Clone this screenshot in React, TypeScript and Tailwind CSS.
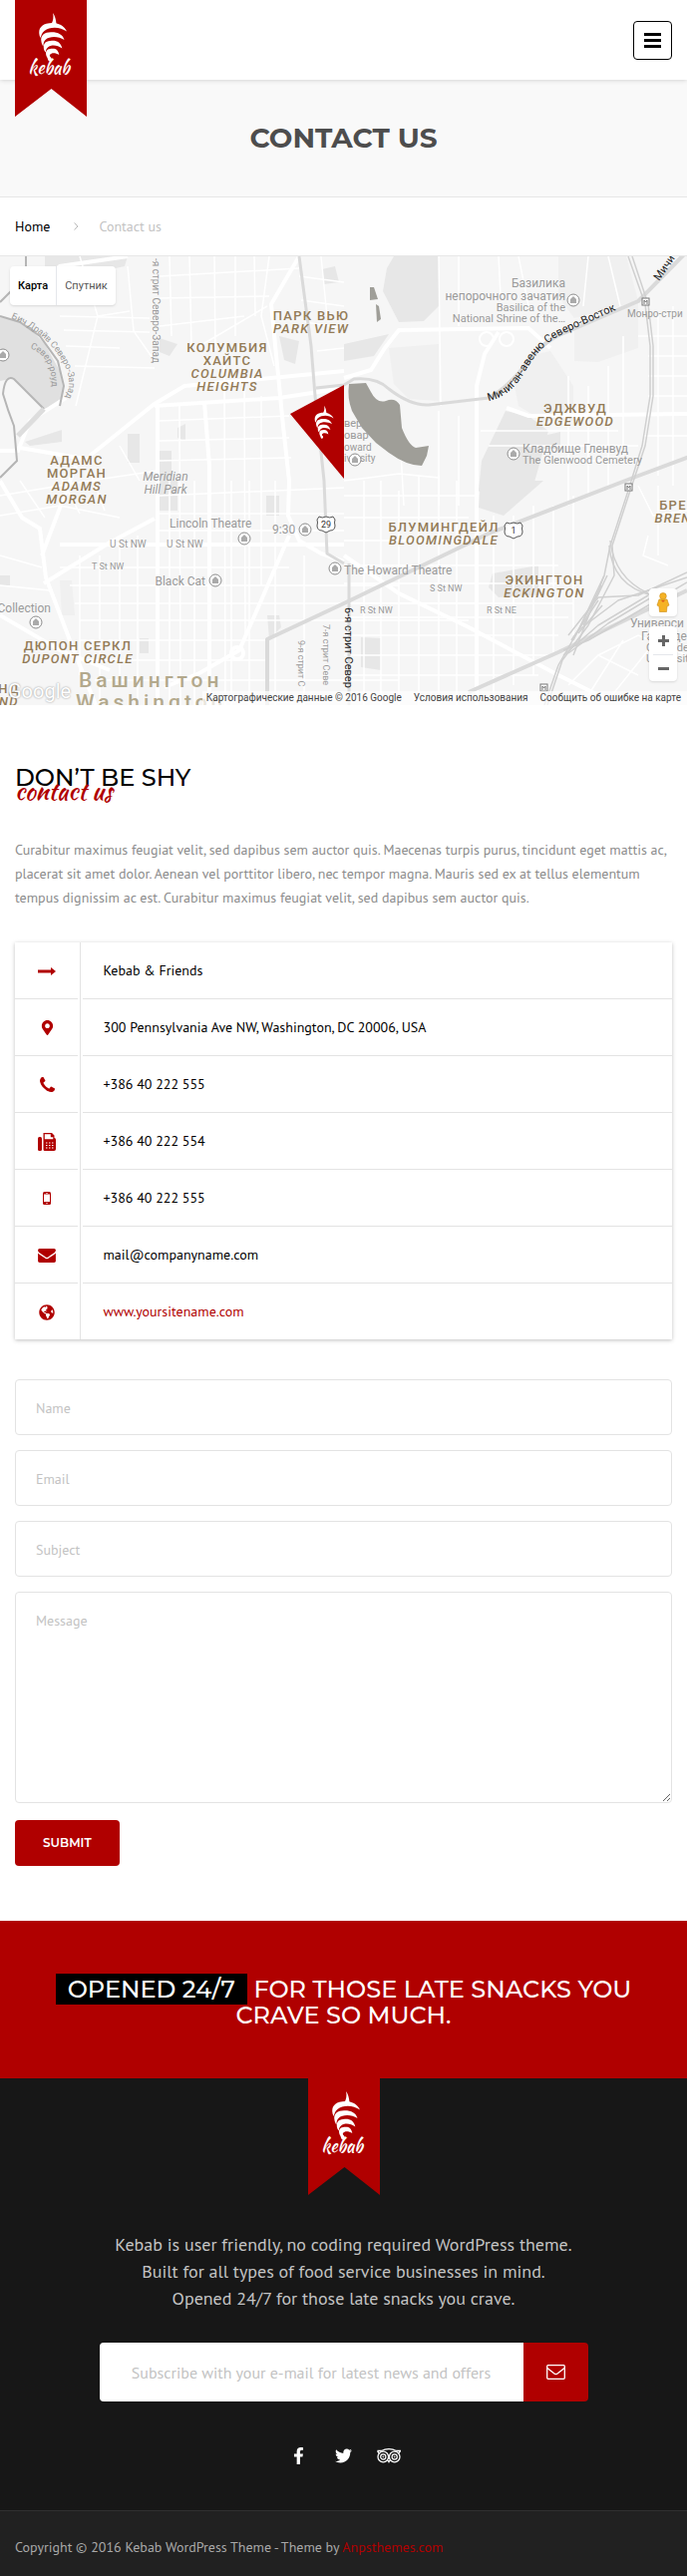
import {
  FaFacebookF,
  FaGlobeAmericas,
  FaMapMarkerAlt,
  FaTripadvisor,
  FaTwitter,
} from "react-icons/fa";

const contactRows = [
  { icon: <ArrowIcon />, label: "Kebab & Friends" },
  {
    icon: <FaMapMarkerAlt size={15} />,
    label: "300 Pennsylvania Ave NW, Washington, DC 20006, USA",
  },
  { icon: <PhoneIcon />, label: "+386 40 222 555" },
  { icon: <FaxIcon />, label: "+386 40 222 554" },
  { icon: <MobileIcon />, label: "+386 40 222 555" },
  { icon: <EnvelopeIcon />, label: "mail@companyname.com" },
  {
    icon: <FaGlobeAmericas size={16} />,
    label: "www.yoursitename.com",
    href: "#",
  },
];

const formFields = [
  { name: "name", type: "text", label: "Name" },
  { name: "email", type: "email", label: "Email" },
  { name: "subject", type: "text", label: "Subject" },
];

const socialLinks = [
  { label: "Facebook", icon: <FaFacebookF size={17} /> },
  { label: "Twitter", icon: <FaTwitter size={17} /> },
  { label: "TripAdvisor", icon: <TripAdvisorIcon /> },
];

// thin white streets
const streets = [
  "M80 0L98 60L76 150M98 60L130 55M60 60L150 62M64 74L150 76M66 90L120 92M75 110L155 112M128 10L134 75L155 105",
  "M170 0L172 80M190 0L192 90M215 0L216 95M236 0L236 80M255 0L256 60M160 20L300 12M160 42L270 40M160 70L245 60M200 90L268 50",
  "M225 110L226 450M245 125L246 380M262 140L262 330M180 150L181 450M270 0L262 60L275 110M160 165L290 160M160 185L290 182M160 205L292 202",
  "M300 20L345 26M302 44L345 50M306 66L345 72M322 0L328 60M318 95L345 92M320 170L345 172M323 200L345 202",
  "M0 240L90 225L158 215M0 260L60 250L120 262M20 225L45 262M60 220L80 258M90 215L105 255M120 190L140 225M0 300L42 312M0 330L50 335",
  "M60 312H290M70 330H400M75 348H480M80 365H470M80 385H268M85 405H268M95 425H400M80 300V420M100 300V450M120 290V430M138 280V450",
  "M170 225V450M195 225V450M232 225V450M250 225V450M276 225V450M305 300V450M160 240L345 232M160 258H345M160 275H345",
  "M345 240H480M345 262H470M345 285H470M345 310H560M345 328H560M345 348H575M345 362H570M345 380H560M345 400H555M345 420H540",
  "M365 225V450M382 225V450M400 235V450M420 220V450M440 220V450M458 225V450M495 260V440M515 260V430M535 250V420M555 250V400M575 240V380",
  "M482 175H620M490 190H640M560 205H640M570 120V250M590 130V240M610 110V230M625 80V200M660 60V220M675 50V230M640 80H689M650 100H689M650 120H689M650 140H689M645 180H689",
  "M440 0L442 150M460 0V70M400 160L405 250M440 155V250M460 160V250M345 225L370 222L400 218L440 222M500 0L502 40M520 0L530 50M590 0L585 50M610 0L622 50",
  "M640 230L655 260L689 255M650 280L645 300L670 310M660 230V300M570 430L600 400L640 420M590 440L625 385M610 445L650 395M600 400L640 380L689 400",
];

const avenues = [
  "M158 150V450",
  "M90 200L155 148L185 130L240 125L345 115",
  "M155 150L280 142L345 132",
  "M205 146L210 210V450",
  "M300 0L272 48L284 170L290 225L289 260L300 285L322 298L345 306",
  "M290 280L262 345L240 395L200 418L165 432",
  "M0 225L22 262L40 273L46 322L70 385L96 450",
  "M76 210L42 300",
  "M44 328L110 287L155 263",
  "M60 289H345",
  "M20 192L90 204",
  "M0 195H18L30 165L66 142",
  "M345 122L372 114L386 92L400 74L530 72L552 92",
  "M500 76L486 98L478 130V450",
  "M508 152L530 160L689 158",
  "M345 300L400 338L470 372L560 420L610 445",
  "M42 26L60 10L128 0",
  "M0 360L60 395L110 415",
];

const blocks = [
  "M45 0H128L125 10L60 24L45 10Z",
  "M160 82L178 88L170 100L160 96Z",
  "M280 80L300 85L296 108L285 104Z",
  "M25 186L62 174V186L30 190Z",
  "M323 13L336 10L340 26L325 28Z",
  "M128 178H140V207H128Z",
  "M160 195H172V225H178V255H160Z",
  "M178 172L186 168V185L178 182Z",
  "M267 240H280V260H267Z",
  "M268 360H280L282 372L270 384Z",
  "M0 320H10V330H0Z",
  "M140 383H149V398H140Z",
  "M395 0H440V50L425 65L400 66L384 35L388 12Z",
  "M345 88L390 78L375 100L345 105Z",
  "M507 155L530 160L550 175L542 205L535 230L500 253L480 235L483 205Z",
  "M482 225H545L505 260L480 252Z",
  "M494 318L540 310V340L500 342L490 332Z",
  "M362 382L382 383V415L362 412Z",
  "M545 180L562 176V193H545Z",
];

const paleBlocks = [
  "M60 325H72L75 360H62Z",
  "M576 72L640 45V92L600 106L576 105Z",
  "M530 100L552 95L575 130V165L545 165L520 150L515 125Z",
  "M560 0H628L640 45L576 62L560 40Z",
  "M390 92L440 88V145L410 143L395 128Z",
];

const railways = [
  "M630 0L647 48L652 90L652 140L644 190L630 235L612 290L606 320L580 375L560 410L546 450",
  "M634 0L650 48L655 90L655 140L647 190L632 235L614 290L616 320L590 370L564 405L549 450",
  "M612 285Q616 322 650 338",
  "M611 290Q614 330 654 340",
  "M689 322L620 345L580 375",
  "M689 317L640 340L600 342L570 380",
  "M689 327L640 356L590 385L565 395",
  "M606 320L575 400M609 320L585 370M603 330L575 385",
  "M600 345L573 385M604 350L580 378M650 340L600 370L565 400M660 338L610 368L570 398",
];

// district names, upright in cyrillic and italic in latin
const districts = [
  { x: 312, y: 64, lines: ["ПАРК ВЬЮ"], latin: ["PARK VIEW"] },
  { x: 228, y: 96, lines: ["КОЛУМБИЯ", "ХАЙТС"], latin: ["COLUMBIA", "HEIGHTS"] },
  { x: 77, y: 209, lines: ["АДАМС", "МОРГАН"], latin: ["ADAMS", "MORGAN"] },
  { x: 577, y: 157, lines: ["ЭДЖВУД"], latin: ["EDGEWOOD"] },
  { x: 445, y: 276, lines: ["БЛУМИНГДЕЙЛ"], latin: ["BLOOMINGDALE"] },
  { x: 546, y: 329, lines: ["ЭКИНГТОН"], latin: ["ECKINGTON"] },
  { x: 78, y: 395, lines: ["ДЮПОН СЕРКЛ"], latin: ["DUPONT CIRCLE"] },
  { x: 675, y: 254, lines: ["БРЕ"], latin: ["BREN"] },
  { x: 9, y: 438, lines: ["НД"], latin: ["ND"] },
];

const places = [
  { x: 567, y: 31, size: 12, anchor: "end", text: "Базилика" },
  { x: 567, y: 44, size: 12, anchor: "end", text: "непорочного зачатия" },
  { x: 567, y: 55, size: 11, anchor: "end", text: "Basilica of the" },
  { x: 567, y: 66, size: 11, anchor: "end", text: "National Shrine of the…" },
  { x: 524, y: 197, size: 12, anchor: "start", text: "Кладбище Гленвуд" },
  { x: 524, y: 208, size: 11, anchor: "start", text: "The Glenwood Cemetery" },
  { x: 629, y: 61, size: 10, anchor: "start", text: "Монро-стри" },
  { x: 345, y: 319, size: 12, anchor: "start", text: "The Howard Theatre" },
  { x: 170, y: 272, size: 12, anchor: "start", text: "Lincoln Theatre" },
  { x: 273, y: 278, size: 12, anchor: "start", text: "9:30" },
  { x: 206, y: 330, size: 12, anchor: "end", text: "Black Cat" },
  { x: 51, y: 357, size: 12, anchor: "end", text: "Collection" },
  { x: 110, y: 292, size: 10, anchor: "start", text: "U St NW" },
  { x: 167, y: 292, size: 10, anchor: "start", text: "U St NW" },
  { x: 92, y: 314, size: 9, anchor: "start", text: "T St NW" },
  { x: 431, y: 336, size: 9, anchor: "start", text: "S St NW" },
  { x: 361, y: 358, size: 9, anchor: "start", text: "R St NW" },
  { x: 488, y: 358, size: 9, anchor: "start", text: "R St NE" },
  { x: 632, y: 372, size: 12, anchor: "start", text: "Универси" },
  { x: 643, y: 385, size: 12, anchor: "start", text: "Галлоде" },
  { x: 648, y: 396, size: 11, anchor: "start", text: "Gallaude" },
  { x: 648, y: 407, size: 11, anchor: "start", text: "Universit" },
  { x: 345, y: 171, size: 11, anchor: "start", text: "вер" },
  { x: 345, y: 183, size: 11, anchor: "start", text: "овар" },
  { x: 345, y: 195, size: 10, anchor: "start", text: "oward" },
  { x: 345, y: 206, size: 10, anchor: "start", text: "iversity" },
] as const;

const pois = [
  [575, 44],
  [515, 198],
  [356, 204],
  [306, 274],
  [245, 283],
  [336, 313],
  [216, 325],
  [36, 367],
  [3, 99],
];

const stations = [
  [647, 45],
  [630, 231],
  [545, 432],
];

function ArrowIcon() {
  return (
    <svg width="18" height="8" viewBox="0 0 18 8" fill="currentColor">
      <path d="M0 2.500h13V0L18 4l-5 4V5.500H0z" />
    </svg>
  );
}

function PhoneIcon() {
  return (
    <svg width="15" height="15" viewBox="0 0 1408 1408" fill="currentColor">
      <path d="M1408 1112q0 27-10 70.5t-21 68.5q-21 50-122 106-94 51-186 51-27 0-53-3.5t-57-12.5-47-14.5-55.500-20.5-49-18q-98-35-175-83-127-79-264-216t-216-264q-48-77-83-175-3-9-18-49t-20.500-55.500-14.500-47-12.500-57-3.500-53q0-92 51-186 56-101 106-122 25-11 68.500-21t70.500-10q14 0 21 3 18 6 53 76 11 19 30 54t35 63.500 31 53.500q3 4 17.500 25t21.500 35.500 7 28.500q0 20-28.500 50t-62 55-62 53-28.500 46q0 9 5 22.500t8.500 20.500 14 24 11.500 19q76 137 174 235t235 174q2 1 19 11.500t24 14 20.500 8.500 22.500 5q18 0 46-28.500t53-62 55-62 50-28.500q14 0 28.500 7t35.500 21.500 25 17.500q25 15 53.500 31t63.500 35 54 30q70 35 76 53 3 7 3 21z" />
    </svg>
  );
}

function FaxIcon() {
  return (
    <svg width="18" height="18" viewBox="0 0 18 18" fill="currentColor">
      <rect x="0" y="4" width="4" height="14" rx="1.500" />
      <path d="M5.500 0H14l2.500 2.500V5A1.800 1.800 0 0 1 18 6.800v9.400a1.800 1.800 0 0 1-1.800 1.800H7a1.500 1.500 0 0 1-1.500-1.500z" />
      <path d="M6.800 1.200h6v3h2.500v2H6.800z" fill="#fff" />
      <path
        d="M8 10h1.500M11 10h1.500M14 10h1.500M8 12.500h1.500M11 12.500h1.500M14 12.500h1.500M8 15h1.500M11 15h1.500M14 15h1.500"
        stroke="#fff"
        strokeWidth="1.200"
      />
    </svg>
  );
}

function MobileIcon() {
  return (
    <svg width="8" height="13" viewBox="0 0 8 13">
      <rect width="8" height="13" rx="1.500" fill="currentColor" />
      <rect x="1" y="2.500" width="6" height="7.500" fill="#fff" />
      <rect x="3" y="1" width="2" height=".6" fill="#fff" />
      <circle cx="4" cy="11.500" r=".7" fill="#fff" />
    </svg>
  );
}

function EnvelopeIcon() {
  return (
    <svg width="18" height="14" viewBox="0 256 1792 1408" fill="currentColor">
      <path d="M1792 710v794q0 66-47 113t-113 47h-1472q-66 0-113-47t-47-113v-794q44 49 101 87 362 246 497 345 57 42 92.500 65.500t94.500 48 110 24.500h2q51 0 110-24.500t94.500-48 92.500-65.500q170-123 498-345 57-39 100-87zm0-294q0 79-49 151t-122 123q-376 261-468 325-10 7-42.500 31t-54 38.500-52 32.500-57.500 27-50 9h-2q-23 0-50-9t-57.500-27-52-32.500-54-38.500-42.500-31q-91-64-262-182.500t-205-142.500q-62-42-117-115.500t-55-136.500q0-78 41.500-130t118.500-52h1472q65 0 112.500 47t47.500 113z" />
    </svg>
  );
}

function EnvelopeOutlineIcon() {
  return (
    <svg
      width="19"
      height="15"
      viewBox="0 0 19 15"
      fill="none"
      stroke="currentColor"
      strokeWidth="1.300"
      strokeLinejoin="round"
    >
      <rect x=".7" y=".7" width="17.600" height="13.600" rx="1" />
      <path d="M1 3.500C3 5.500 5.500 7 7.500 8.800c1.500 1.200 2.500 1.200 4 0C13.500 7 16 5.500 18 3.500" />
    </svg>
  );
}

function TripAdvisorIcon() {
  return (
    <svg width="24" height="15" viewBox="0 0 24 15" fill="none" stroke="currentColor">
      <path d="M.5 2.500H4.500Q8 .7 12 .7T19.500 2.500H23.500L22 5M2 5L.5 2.500" strokeWidth="1.300" />
      <circle cx="6.300" cy="8.500" r="5.300" strokeWidth="1.300" />
      <circle cx="17.700" cy="8.500" r="5.300" strokeWidth="1.300" />
      <circle cx="6.300" cy="8.500" r="2.600" strokeWidth="1.200" />
      <circle cx="17.700" cy="8.500" r="2.600" strokeWidth="1.200" />
      <circle cx="6.300" cy="8.500" r=".5" />
      <circle cx="17.700" cy="8.500" r=".5" />
      <path d="M10.500 12L12 14.500L13.500 12" fill="currentColor" strokeWidth=".5" />
    </svg>
  );
}

// kebab skewer drawn on a 72 x 117 grid
function KebabShape() {
  return (
    <g fill="#fff">
      <path d="M53 13C55.500 16 56 20 56.500 24L51 25C53.500 21 54 17 53 13Z" />
      <path d="M40.500 38C37.500 31 40 25.500 46.500 23.800C55 21.800 63.500 24 67 31.500C60 26.500 50 26.500 44.500 31C42 33 41.500 35.500 40.500 38Z" />
      <path d="M41.500 42C40 35 45 32.300 51 32.200C58 32 63 34.500 64.500 40C58.500 36.300 50 36 45.500 40C43.500 42 43.500 44.500 43.500 46.500C42.300 45 41.800 43.500 41.500 42Z" />
      <path d="M43.800 48C43.500 42.500 47 41 52 40.800C57.500 40.600 61 43 62.300 48.500C57.500 45 51.500 44.500 48 47.500C46 49.300 46 51 46 52.500C44.500 51 44 50 43.800 48Z" />
      <path d="M46 53C46.500 49.500 49 48.800 52.500 48.700C56.500 48.600 58.500 50.500 59.300 55C55.500 52.500 51.500 52.500 50 55C49 57 52.500 57 51.500 60C51 62 48.500 62 48 59.500C47.700 57.500 45.800 56 46 53Z" />
    </g>
  );
}

function Ribbon() {
  return (
    <svg
      width="72"
      height="117"
      viewBox="0 0 72 117"
      role="img"
      aria-label="kebab"
      className="block shrink-0"
    >
      <path d="M0 0H72V117L36.500 89L0 117Z" fill="#b00000" />
      <g transform="translate(-15 0)">
        <KebabShape />
      </g>
      <text
        x="34"
        y="74"
        textAnchor="middle"
        fill="#fff"
        className="font-['Kaushan_Script','Lato',sans-serif] text-[18px]"
      >
        kebab
      </text>
    </svg>
  );
}

function MapCanvas() {
  return (
    <svg
      viewBox="0 0 689 450"
      preserveAspectRatio="xMidYMid slice"
      className="block h-full w-full font-['Roboto',sans-serif]"
    >
      <rect width="689" height="450" fill="#f6f6f6" />
      {blocks.map((d) => (
        <path key={d} d={d} fill="#e7e7e7" />
      ))}
      {paleBlocks.map((d) => (
        <path key={d} d={d} fill="#f0f0f0" />
      ))}
      <path
        d="M0 61L10 63L28 70L45 88L60 115L64 135L58 149L44 153L30 138L12 122L5 124L0 125Z"
        fill="#e0e0e0"
      />
      <g fill="none" stroke="#fff">
        {streets.map((d) => (
          <path key={d} d={d} strokeWidth="1.500" />
        ))}
        {avenues.map((d) => (
          <path key={d} d={d} strokeWidth="4" />
        ))}
        <circle cx="238" cy="398" r="6" strokeWidth="4" />
        <circle cx="488" cy="83" r="7" strokeWidth="2" />
        <circle cx="508" cy="83" r="7" strokeWidth="2" />
      </g>
      <g fill="none" stroke="#b5b5b5" strokeWidth="2">
        <path d="M26 0V10L22 20M0 46L12 34" />
        <path d="M0 60L20 66L40 80L58 105L64 130L60 150" />
        <path d="M44 153L14 123Q5 118 3 138Q8 155 14 170L17 205L0 222" />
        <path d="M44 153L18 180" stroke="#ddd" strokeWidth="5" />
      </g>
      <g fill="none" stroke="#dadada" strokeLinejoin="round">
        <path d="M300 0L312 90L316 140L325 225L328 298L345 308" strokeWidth="3" />
        <path d="M350 308V450" strokeWidth="3" />
        <path d="M317 132L345 129L355 123Q378 121 390 133Q412 150 430 149L490 142" strokeWidth="3" />
        <path d="M490 142Q510 132 530 105Q548 82 570 75L640 45Q655 30 694 -10" strokeWidth="4" />
        <path d="M268 450V384L345 348L490 278L635 222L694 200" strokeWidth="4" />
        <path d="M470 437L560 397L689 335" strokeWidth="4" />
        {railways.map((d) => (
          <path key={d} d={d} strokeWidth="1.500" stroke="#d0d0d0" />
        ))}
      </g>

      <g fill="#9a9a9a">
        {places.map((place) => (
          <text
            key={`${place.text}-${place.x}`}
            x={place.x}
            y={place.y}
            fontSize={place.size}
            textAnchor={place.anchor}
          >
            {place.text}
          </text>
        ))}
        <text x="166" y="225" fontSize="12" fontStyle="italic" textAnchor="middle">
          Meridian
        </text>
        <text x="166" y="238" fontSize="12" fontStyle="italic" textAnchor="middle">
          Hill Park
        </text>
        <text fontSize="10" transform="translate(153 2) rotate(90)">
          -я стрит Северо-Запад
        </text>
        <text fontSize="9" transform="translate(299 385) rotate(90)">
          9-я стрит С
        </text>
        <text fontSize="9" transform="translate(324 369) rotate(90)">
          7-я стрит Севе
        </text>
        <path id="beach-drive" d="M11 62Q50 78 66 112Q76 138 54 153" fill="none" />
        <text fontSize="9">
          <textPath href="#beach-drive">Бич Драйв Северо-Запад</textPath>
        </text>
        <path id="north-road" d="M30 92Q52 100 52 130" fill="none" />
        <text fontSize="9">
          <textPath href="#north-road">Север-роуд</textPath>
        </text>
      </g>

      <g fill="#9f9e98">
        <path d="M350 128L367 127L372 136Q378 148 387 145Q396 141 401 149L403 172Q410 190 417 192L430 190L428 200L423 210Q408 210 390 197L377 187L363 172L353 155Q348 142 350 128Z" />
        <path d="M371 31H375L379 43L371 44Z" />
        <path d="M377 48L380 50L382 63L378 66Z" />
      </g>

      <g fill="#222" fontSize="11">
        <path
          id="michigan"
          d="M490 145Q512 141 527 115Q542 88 566 77L644 42"
          fill="none"
        />
        <text>
          <textPath href="#michigan">Мичиган-авеню Северо-Восток</textPath>
        </text>
        <text transform="translate(661 25) rotate(-55)">Мичи</text>
        <text transform="translate(346 352) rotate(90)">6-я стрит Север</text>
      </g>

      <g fill="#937b57" fontWeight="500" textAnchor="middle">
        {districts.map((area) => (
          <g key={area.lines[0]} fontSize="13" className="tracking-widest">
            {area.lines.map((line, i) => (
              <text key={line} x={area.x} y={area.y + i * 13}>
                {line}
              </text>
            ))}
            {area.latin.map((line, i) => (
              <text
                key={line}
                x={area.x}
                y={area.y + (area.lines.length + i) * 13}
                fontStyle="italic"
              >
                {line}
              </text>
            ))}
          </g>
        ))}
      </g>
      <g fill="#b3a98d" fontWeight="500" fontSize="21" className="tracking-[4px]">
        <text x="79" y="432">Вашингтон</text>
        <text x="76" y="454">Washington</text>
      </g>

      {pois.map(([x, y]) => (
        <g key={`${x}-${y}`}>
          <circle cx={x} cy={y} r="6" fill="#fff" stroke="#8d8d8d" />
          <path d={`M${x - 3} ${y + 3}v-4l3-3 3 3v4z`} fill="#aaa" />
        </g>
      ))}
      {stations.map(([x, y]) => (
        <g key={`${x}-${y}`}>
          <rect x={x - 3} y={y - 3} width="7" height="7" fill="#fff" stroke="#777" />
          <path d={`M${x - 1} ${y + 3}v-4l1.500 2 1.500-2v4`} stroke="#777" fill="none" />
        </g>
      ))}
      {[
        { x: 327, y: 269, n: "29" },
        { x: 515, y: 275, n: "1" },
      ].map((route) => (
        <g key={route.n} transform={`translate(${route.x} ${route.y})`}>
          <path
            d="M-7-8Q-4-6 0-8Q4-6 7-8L9-5Q8-2 9 1Q9 6 4 6L0 8L-4 6Q-9 6-9 1Q-8-2-9-5Z"
            fill="#fff"
            stroke="#555"
          />
          <text y="3" fontSize="9" textAnchor="middle" fill="#333">
            {route.n}
          </text>
        </g>
      ))}

      <path d="M291 158L345 129V223Z" fill="#b00000" />
      <g transform="translate(289 141) scale(.68)">
        <KebabShape />
      </g>
    </svg>
  );
}

function PegmanIcon() {
  return (
    <svg width="14" height="20" viewBox="0 0 14 20" fill="#f5b225" stroke="#c98a12" strokeWidth=".6">
      <path d="M3 7h8l2 6-2 1-.5 5.500h-7L3 14l-2-1z" />
      <circle cx="7" cy="3.800" r="3.300" />
      <path d="M5 8l2 2 2-2z" fill="#e05a1c" stroke="none" />
    </svg>
  );
}

function ContactMap() {
  return (
    <section className="relative h-[450px] overflow-hidden font-['Roboto',sans-serif]">
      <MapCanvas />
      <div className="absolute left-[10px] top-[10px] flex rounded-sm bg-white text-[11px] leading-[39px] shadow">
        <button className="border-r border-gray-200 px-2 font-medium text-black">
          Карта
        </button>
        <button className="px-2 text-[#565656]">Спутник</button>
      </div>
      <div className="absolute bottom-6 right-[10px] flex flex-col gap-[10px]">
        <button
          aria-label="Street View"
          className="flex h-7 w-7 items-center justify-center rounded-sm bg-white shadow"
        >
          <PegmanIcon />
        </button>
        <div className="flex w-7 flex-col items-center rounded-sm bg-white shadow">
          <button aria-label="+" className="flex h-7 w-7 items-center justify-center">
            <svg width="11" height="11" stroke="#666" strokeWidth="3">
              <path d="M0 5.500H11M5.500 0V11" />
            </svg>
          </button>
          <div className="h-px w-5 bg-gray-200" />
          <button aria-label="−" className="flex h-[26px] w-7 items-center justify-center">
            <svg width="11" height="11" stroke="#666" strokeWidth="3">
              <path d="M0 5.500H11" />
            </svg>
          </button>
        </div>
      </div>
      <div className="absolute bottom-0 left-2 text-[20px] leading-7 text-white [text-shadow:0_0_2px_#888]">
        Google
      </div>
      <div className="absolute bottom-0 right-0 flex gap-3 bg-white/70 pl-1 pr-[6px] text-[10px] leading-[14px] text-[#444]">
        <span>Картографические данные © 2016 Google</span>
        <a href="#">Условия использования</a>
        <a href="#">Сообщить об ошибке на карте</a>
      </div>
    </section>
  );
}

export default function App() {
  return (
    <div className="bg-white font-['PT_Sans','Noto_Sans',sans-serif] text-[14px] text-black">
      {/* Header */}
      <header className="relative z-10 flex h-20 items-start justify-between bg-white px-[15px] shadow-[0_0_5px_rgba(0,0,0,0.2)]">
        <a href="#">
          <Ribbon />
        </a>
        <button
          aria-label="Menu"
          className="mt-[21px] flex h-[39px] w-[39px] flex-col items-center justify-center gap-[3px] rounded border border-black"
        >
          <span className="h-[3px] w-[17px] bg-black" />
          <span className="h-[3px] w-[17px] bg-black" />
          <span className="h-[3px] w-[17px] bg-black" />
        </button>
      </header>

      {/* Page title */}
      <div className="flex h-[118px] items-center justify-center border-b border-[#e7e7e7] bg-[#f9f9f9]">
        <h1 className="pb-[2px] font-['Montserrat','Inter',sans-serif] text-[28px] font-bold text-[#4d4d4d]">
          CONTACT US
        </h1>
      </div>

      {/* Breadcrumbs */}
      <nav className="flex h-[59px] items-center border-b border-[#e7e7e7] px-[15px]">
        <a href="#">Home</a>
        <svg width="5" height="8" viewBox="0 0 5 8" fill="none" stroke="#bbb" className="ml-6 mr-5">
          <path d="M.5.500L4 4L.5 7.500" />
        </svg>
        <span className="text-[#c3c3c3]">Contact us</span>
      </nav>

      <ContactMap />

      <main className="px-[15px] pb-[55px] pt-[58px]">
        <h2 className="font-['Montserrat','Inter',sans-serif] text-[24px] font-medium leading-[30px]">
          DON’T BE SHY
        </h2>
        <p className="-mt-[14px] font-['Kaushan_Script','Lato',sans-serif] text-[24px] leading-[26px] text-[#b00000]">
          contact us
        </p>

        <p className="mt-[33px] leading-6 text-[#8c8c8c]">
          Curabitur maximus feugiat velit, sed dapibus sem auctor quis. Maecenas
          turpis purus, tincidunt eget mattis ac, placerat sit amet dolor. Aenean
          vel porttitor libero, nec tempor magna. Mauris sed ex at tellus
          elementum tempus dignissim ac est. Curabitur maximus feugiat velit, sed
          dapibus sem auctor quis.
        </p>

        {/* Contact details */}
        <table className="mt-[33px] w-full shadow-[0_1px_4px_rgba(0,0,0,0.25)]">
          <tbody>
            {contactRows.map((row, i) => (
              <tr key={i} className="group">
                <td className="w-[65px] border-r border-[#e3e3e3] p-0 pr-[2px]">
                  <div className="flex h-[57px] items-center justify-center border-b border-[#e3e3e3] pl-[2px] pt-px text-[#b00000] group-last:h-14 group-last:border-b-0">
                    {row.icon}
                  </div>
                </td>
                <td className="p-0 pl-[2px]">
                  <div className="flex h-[57px] items-center border-b border-[#e3e3e3] pl-[21px] pt-px group-last:h-14 group-last:border-b-0">
                    {row.href ? (
                      <a href={row.href} className="text-[#b00000]">
                        {row.label}
                      </a>
                    ) : (
                      row.label
                    )}
                  </div>
                </td>
              </tr>
            ))}
          </tbody>
        </table>

        {/* Contact form */}
        <form className="mt-10 flex flex-col items-start gap-[15px]">
          {formFields.map((field) => (
            <input
              key={field.name}
              type={field.type}
              name={field.name}
              aria-label={field.label}
              placeholder={field.label}
              className="h-14 w-full rounded border border-[#e3e3e3] px-5 pt-px placeholder:text-[#c3c3c3]"
            />
          ))}
          <textarea
            name="message"
            aria-label="Message"
            placeholder="Message"
            className="h-[212px] w-full rounded border border-[#e3e3e3] px-5 py-[18px] placeholder:text-[#c3c3c3]"
          />
          <button className="mt-[2px] h-[46px] rounded bg-[#b00000] px-7 font-['Montserrat','Inter',sans-serif] text-[12px] font-semibold text-white">
            SUBMIT
          </button>
        </form>
      </main>

      {/* Call to action */}
      <section className="bg-[#b00000] px-[15px] pb-[50px] pt-14 text-center">
        <h2 className="font-['Montserrat','Inter',sans-serif] text-[24px] font-medium leading-[26px] text-white">
          <span className="bg-black px-3 py-px">OPENED 24/7</span> FOR THOSE
          LATE SNACKS YOU CRAVE SO MUCH.
        </h2>
      </section>

      {/* Footer */}
      <footer className="bg-[#171717]">
        <div className="flex flex-col items-center">
          <Ribbon />
          <p className="mt-9 text-center text-[18px] leading-[27px] text-[#c3c3c3]">
            Kebab is user friendly, no coding required WordPress theme.
            <br />
            Built for all types of food service businesses in mind.
            <br />
            Opened 24/7 for those late snacks you crave.
          </p>
          <form className="mt-[31px] flex h-[59px] w-full max-w-[490px] overflow-hidden rounded">
            <input
              type="email"
              aria-label="Subscribe with your e-mail for latest news and offers"
              placeholder="Subscribe with your e-mail for latest news and offers"
              className="min-w-0 flex-1 bg-white px-6 text-center text-[16px] placeholder:text-[#c3c3c3]"
            />
            <button
              aria-label="Subscribe"
              className="flex w-[65px] items-center justify-center bg-[#b00000] text-white"
            >
              <EnvelopeOutlineIcon />
            </button>
          </form>
          <div className="flex h-[109px] items-center text-white">
            {socialLinks.map((link) => (
              <a
                key={link.label}
                href="#"
                aria-label={link.label}
                className="flex w-[45px] justify-center"
              >
                {link.icon}
              </a>
            ))}
          </div>
        </div>
        <div className="flex h-[66px] items-center border-t border-[#303030] bg-[#212121] px-[15px] pt-2 text-[#a8a8a8]">
          <p>
            Copyright © 2016 Kebab WordPress Theme - Theme by{" "}
            <a href="#" className="text-[#b00000]">
              Anpsthemes.com
            </a>
          </p>
        </div>
      </footer>
    </div>
  );
}
